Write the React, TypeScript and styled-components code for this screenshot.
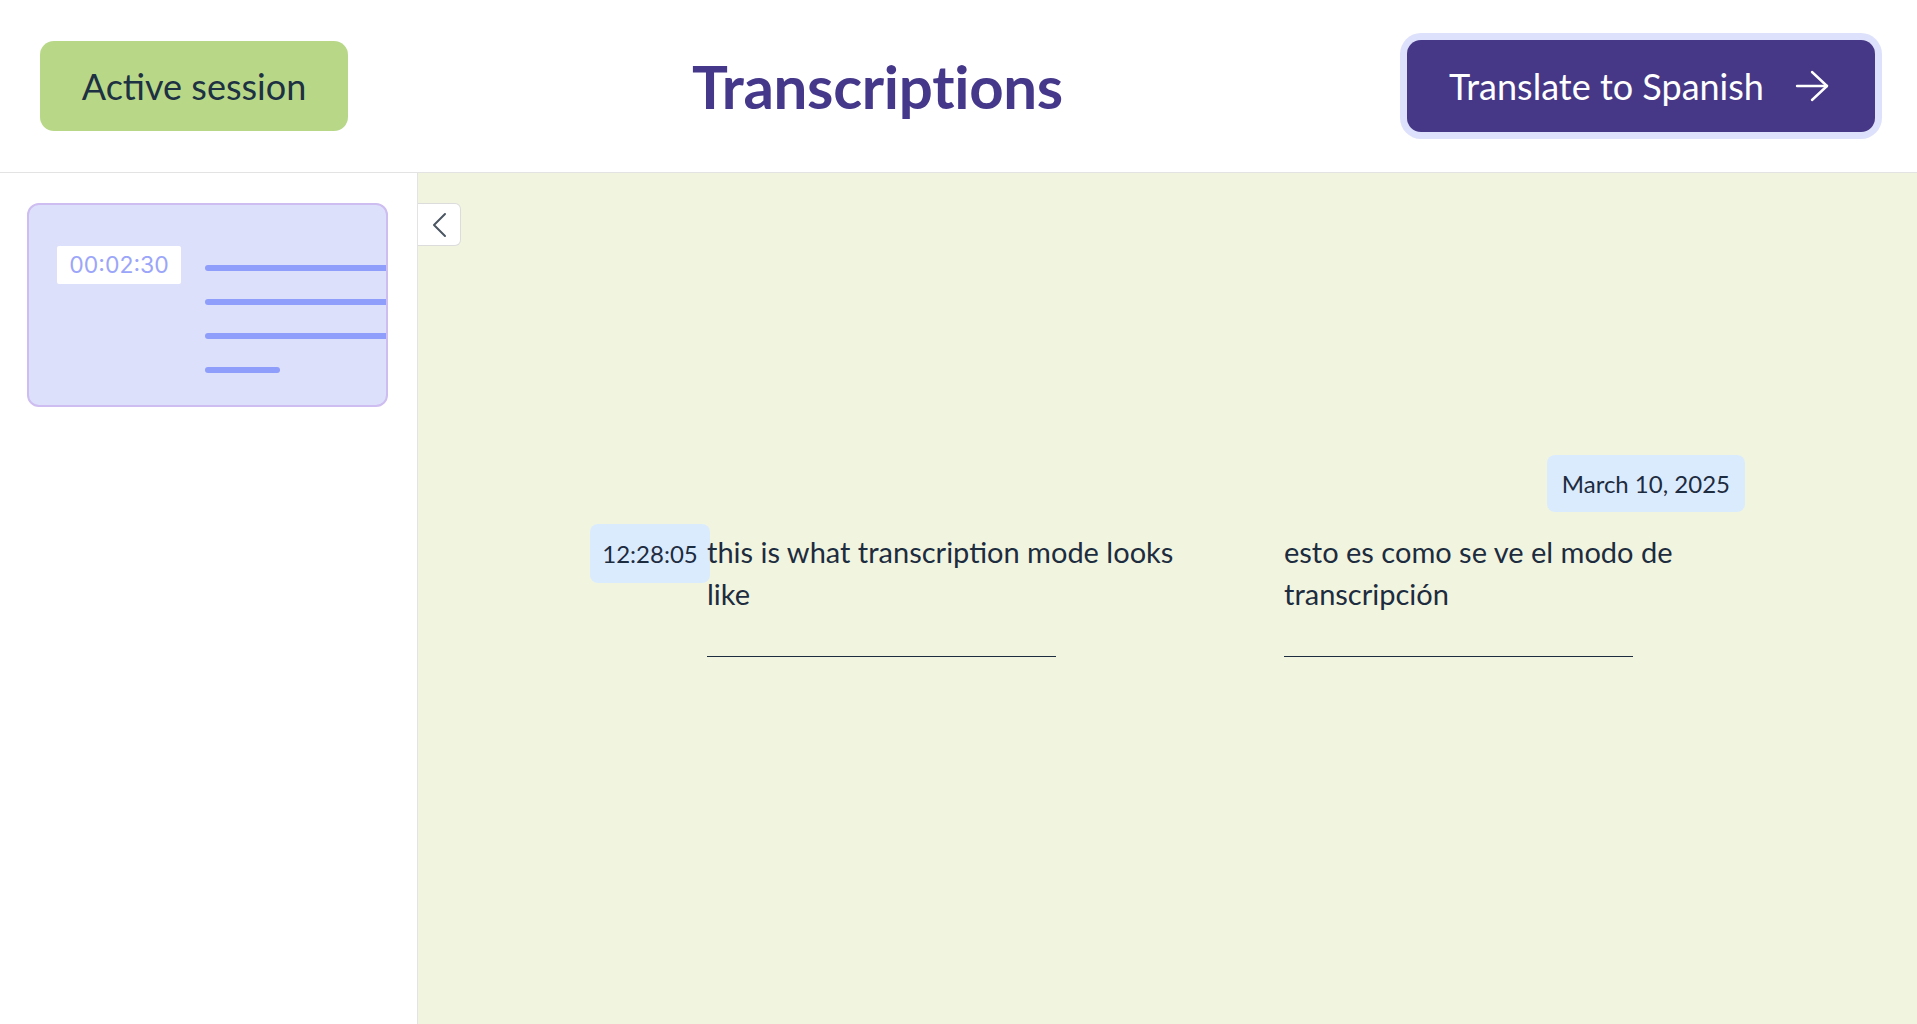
import React from 'react';
import styled, {createGlobalStyle} from 'styled-components';

const GlobalStyle = createGlobalStyle`
    * {
        box-sizing: border-box;
    }

    body {
        margin: 0;
        font-family: Lato, "Noto Sans", sans-serif;
        color: #1d2c3e;
        background: #ffffff;
    }
`

const Page = styled.div`
    display: flex;
    flex-direction: column;
    height: 100vh;
`

const Header = styled.header`
    display: flex;
    align-items: center;
    justify-content: space-between;
    height: 173px;
    padding: 0 42px 0 40px;
    border-bottom: 1px solid #e3e3e3;
    flex-shrink: 0;
`

const SessionBadge = styled.div`
    width: 308px;
    height: 90px;
    display: flex;
    align-items: center;
    justify-content: center;
    background: #b8d888;
    border-radius: 14px;
    font-size: 36px;
    color: #1d3142;
`

const Title = styled.h1`
    margin: 0;
    font-size: 60px;
    font-weight: 700;
    color: #45378a;
    letter-spacing: -0.3px;
`

const TranslateButton = styled.button`
    width: 468px;
    height: 92px;
    display: flex;
    align-items: center;
    justify-content: space-between;
    padding: 0 46px 0 42px;
    border: none;
    border-radius: 14px;
    background: #463886;
    box-shadow: 0 0 0 7px #dee1fb;
    color: #ffffff;
    font-family: Lato, "Noto Sans", sans-serif;
    font-size: 36px;
    cursor: pointer;
`

const Body = styled.div`
    flex: 1;
    display: flex;
    min-height: 0;
`

const Sidebar = styled.aside`
    width: 418px;
    flex-shrink: 0;
    padding: 30px 0 0 27px;
    border-right: 1px solid #e3e3e3;
    background: #ffffff;
`

const SessionCard = styled.div`
    width: 361px;
    height: 204px;
    display: flex;
    gap: 24px;
    padding: 41px 0 0 28px;
    border: 2px solid #cdbdf0;
    border-radius: 12px;
    background: #dde0fb;
    overflow: hidden;
`

const CardTime = styled.div`
    width: 124px;
    height: 38px;
    display: flex;
    align-items: center;
    justify-content: center;
    background: #ffffff;
    border-radius: 2px;
    font-family: Inter, sans-serif;
    font-size: 23px;
    color: #9ba5f9;
    flex-shrink: 0;
`

const CardLines = styled.div`
    display: flex;
    flex-direction: column;
    gap: 28px;
    padding-top: 19px;
    flex: 1;
`

const CardLine = styled.div<{ short?: boolean }>`
    height: 6px;
    width: ${props => props.short ? '75px' : '100%'};
    background: #8f9dfb;
    border-radius: ${props => props.short ? '3px' : '3px 0 0 3px'};
`

const Main = styled.main`
    position: relative;
    flex: 1;
    background: #f1f5df;
    padding-top: 282px;
`

const CollapseButton = styled.button`
    position: absolute;
    top: 30px;
    left: 0;
    width: 43px;
    height: 43px;
    display: flex;
    align-items: center;
    justify-content: center;
    padding: 0;
    background: #ffffff;
    border: 1px solid #dcdcdc;
    border-left: none;
    border-radius: 0 6px 6px 0;
    cursor: pointer;
`

const Feed = styled.div`
    width: 1155px;
    margin: 0 auto;
    display: flex;
    flex-direction: column;
    gap: 12px;
`

const DateBadge = styled.div`
    align-self: flex-end;
    height: 57px;
    padding: 0 15px;
    display: flex;
    align-items: center;
    background: #dbebfe;
    border-radius: 8px;
    font-size: 24px;
`

const Entry = styled.div`
    display: grid;
    grid-template-columns: 117px 577px 1fr;
    align-items: start;
`

const TimeBadge = styled.div`
    width: 120px;
    height: 59px;
    display: flex;
    align-items: center;
    justify-content: center;
    background: #dbebfe;
    border-radius: 8px;
    font-size: 24px;
`

const Column = styled.div`
    max-width: 480px;
    padding-top: 7px;
`

const Line = styled.p`
    margin: 0;
    font-size: 29px;
    line-height: 42px;
`

const Divider = styled.div`
    width: 349px;
    height: 1px;
    margin-top: 41px;
    background: #1d2c3e;
`

const ArrowIcon = () => (
    <svg width="34" height="32" viewBox="0 0 34 32" fill="none" stroke="#ffffff" strokeWidth="2.4"
         strokeLinecap="round" strokeLinejoin="round">
        <line x1="2" y1="16" x2="32" y2="16"/>
        <polyline points="17,2 32,16 17,30"/>
    </svg>
)

const ChevronIcon = () => (
    <svg width="16" height="26" viewBox="0 0 16 26" fill="none" stroke="#4b5663" strokeWidth="2"
         strokeLinecap="round" strokeLinejoin="round">
        <polyline points="14,2 3,13 14,24"/>
    </svg>
)

export default function App() {
    return <>
        <GlobalStyle/>
        <Page>
            <Header>
                <SessionBadge>Active session</SessionBadge>
                <Title>Transcriptions</Title>
                <TranslateButton>
                    <span>Translate to Spanish</span>
                    <ArrowIcon/>
                </TranslateButton>
            </Header>
            <Body>
                <Sidebar>
                    <SessionCard>
                        <CardTime>00:02:30</CardTime>
                        <CardLines>
                            <CardLine/>
                            <CardLine/>
                            <CardLine/>
                            <CardLine short/>
                        </CardLines>
                    </SessionCard>
                </Sidebar>
                <Main>
                    <CollapseButton aria-label="Collapse sidebar">
                        <ChevronIcon/>
                    </CollapseButton>
                    <Feed>
                        <DateBadge>March 10, 2025</DateBadge>
                        <Entry>
                            <TimeBadge>12:28:05</TimeBadge>
                            <Column>
                                <Line>this is what transcription mode looks like</Line>
                                <Divider/>
                            </Column>
                            <Column>
                                <Line>esto es como se ve el modo de transcripción</Line>
                                <Divider/>
                            </Column>
                        </Entry>
                    </Feed>
                </Main>
            </Body>
        </Page>
    </>
}
